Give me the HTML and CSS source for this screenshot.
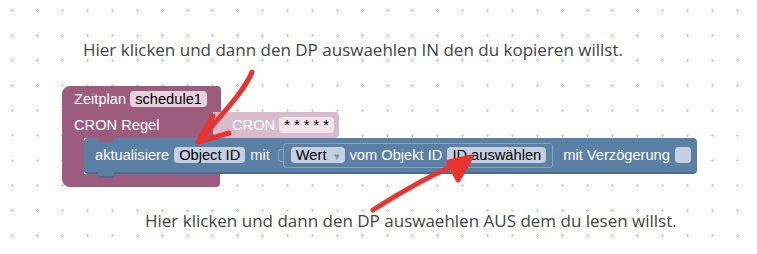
FILE: index.html
```html
<!DOCTYPE html>
<html lang="de">
<head>
  <meta charset="UTF-8" />
  <title>Zeitplan</title>
  <link rel="stylesheet" href="styles.css">
</head>
<body>
  <div class="canvas">
    <svg class="grid" width="757" height="254">
      <defs>
        <pattern id="dots" width="25" height="25" patternUnits="userSpaceOnUse">
          <path d="M11 10.5h3M12.5 9v3" stroke="#cdcdcd" stroke-width="1" />
        </pattern>
      </defs>
      <rect width="757" height="254" fill="url(#dots)" />
    </svg>

    <p class="note note-top">Hier klicken und dann den DP auswaehlen IN den du kopieren willst.</p>

    <div class="schedule">
      <div class="head">
        <span>Zeitplan</span>
        <span class="field field-pink">schedule1</span>
      </div>
      <div class="cron-row">
        <div class="cron-label">CRON Regel</div>
        <div class="cron-input">
          <span>CRON</span>
          <span class="field field-light">* * * * *</span>
        </div>
      </div>
      <div class="stmt">
        <div class="stmt-bar"></div>
        <div class="update">
          <span>aktualisiere</span>
          <span class="field field-blue">Object ID</span>
          <span>mit</span>
          <div class="value">
            <span class="field field-blue">Wert <span class="caret">▾</span></span>
            <span>vom Objekt ID</span>
            <span class="field field-blue">ID auswählen</span>
          </div>
          <span class="delay">mit Verzögerung</span>
          <span class="check"></span>
        </div>
      </div>
      <div class="foot"></div>
    </div>

    <p class="note note-bottom">Hier klicken und dann den DP auswaehlen AUS dem du lesen willst.</p>

    <svg class="arrows" width="757" height="254">
      <path d="M252 72 C246 88 228 108 199 141" />
      <path d="M213 116 L198 142 L229 133" />
      <path d="M373 210 C398 194 428 176 464 161" />
      <path class="head-fill" d="M449 162 L471 157 L458 180 Z" />
    </svg>
  </div>
</body>
</html>
```

FILE: styles.css
```css
body {
  margin: 0;
  background: white;
  font-family: "Liberation Sans", Arial, sans-serif;
}
.canvas {
  position: relative;
  width: 757px;
  height: 254px;
  overflow: hidden;
}
.grid, .arrows {
  position: absolute;
  left: 0;
  top: 0;
}
.arrows path {
  fill: none;
  stroke: #e8332e;
  stroke-width: 5;
  stroke-linecap: round;
  stroke-linejoin: round;
}
.arrows .head-fill {
  fill: #e8332e;
}

.note {
  position: absolute;
  margin: 0;
  font-family: "Open Sans", sans-serif;
  font-size: 17px;
  line-height: 24px;
  color: #444;
  white-space: nowrap;
}
.note-top {
  left: 83px;
  top: 38px;
}
.note-bottom {
  left: 145px;
  top: 209px;
}

/* blocks */
.schedule {
  position: absolute;
  left: 62px;
  top: 86px;
  display: flex;
  flex-direction: column;
  color: white;
  font-size: 14.67px;
}
.head {
  width: 159px;
  height: 26px;
  box-sizing: border-box;
  padding-left: 12px;
  display: flex;
  align-items: center;
  gap: 4px;
  background: #9b5c7d;
  border-radius: 8px 4px 0 0;
}
.cron-row {
  display: flex;
  height: 26px;
}
.cron-label {
  width: 151px;
  box-sizing: border-box;
  padding-left: 12px;
  display: flex;
  align-items: center;
  background: #9b5c7d;
}
.cron-input {
  display: flex;
  align-items: center;
  gap: 4px;
  padding: 0 5px 0 19px;
  background: #d8bccb;
  border-radius: 0 4px 4px 0;
}
.stmt {
  display: flex;
  height: 36px;
}
.stmt-bar {
  width: 22px;
  background: #9b5c7d;
}
.foot {
  width: 158px;
  height: 13px;
  background: #9b5c7d;
  border-radius: 0 0 4px 8px;
}

.field {
  color: black;
  height: 16px;
  line-height: 16px;
  padding: 0 5px;
  border-radius: 4px;
  white-space: nowrap;
}
.field-pink { background: #e6d3dd; }
.field-light { background: #efe4ea; }
.field-blue { background: #c6cfe0; }
.caret {
  color: #7f95b6;
  font-size: 11px;
  margin-left: 3px;
}

.update {
  position: relative;
  display: flex;
  align-items: center;
  gap: 5px;
  padding: 0 6px 0 11px;
  box-sizing: border-box;
  height: 36px;
  background: #5b80a5;
  border-bottom: 2px solid #4a6a8e;
  border-radius: 4px;
}
/* connection notch and tab */
.update::before {
  content: "";
  position: absolute;
  left: 14px;
  top: 0;
  width: 16px;
  height: 4px;
  background: #9b5c7d;
  border-radius: 0 0 4px 4px;
}
.update::after {
  content: "";
  position: absolute;
  left: 14px;
  bottom: -6px;
  width: 16px;
  height: 4px;
  background: #5b80a5;
  border-bottom: 2px solid #4a6a8e;
  border-radius: 0 0 4px 4px;
}
.value {
  position: relative;
  display: flex;
  align-items: center;
  gap: 5px;
  height: 25px;
  box-sizing: border-box;
  margin-left: 8px;
  padding: 0 6px 0 7px;
  border: 1px solid #8aa0bf;
  border-radius: 3px;
}
.value::before {
  content: "";
  position: absolute;
  left: -6px;
  top: 5px;
  width: 5px;
  height: 11px;
  border: 1px solid #8aa0bf;
  border-right: none;
  border-radius: 3px 0 0 3px;
}
.delay {
  margin-left: 5px;
}
.check {
  width: 16px;
  height: 16px;
  background: #c6cfe0;
  border-radius: 4px;
}
```
